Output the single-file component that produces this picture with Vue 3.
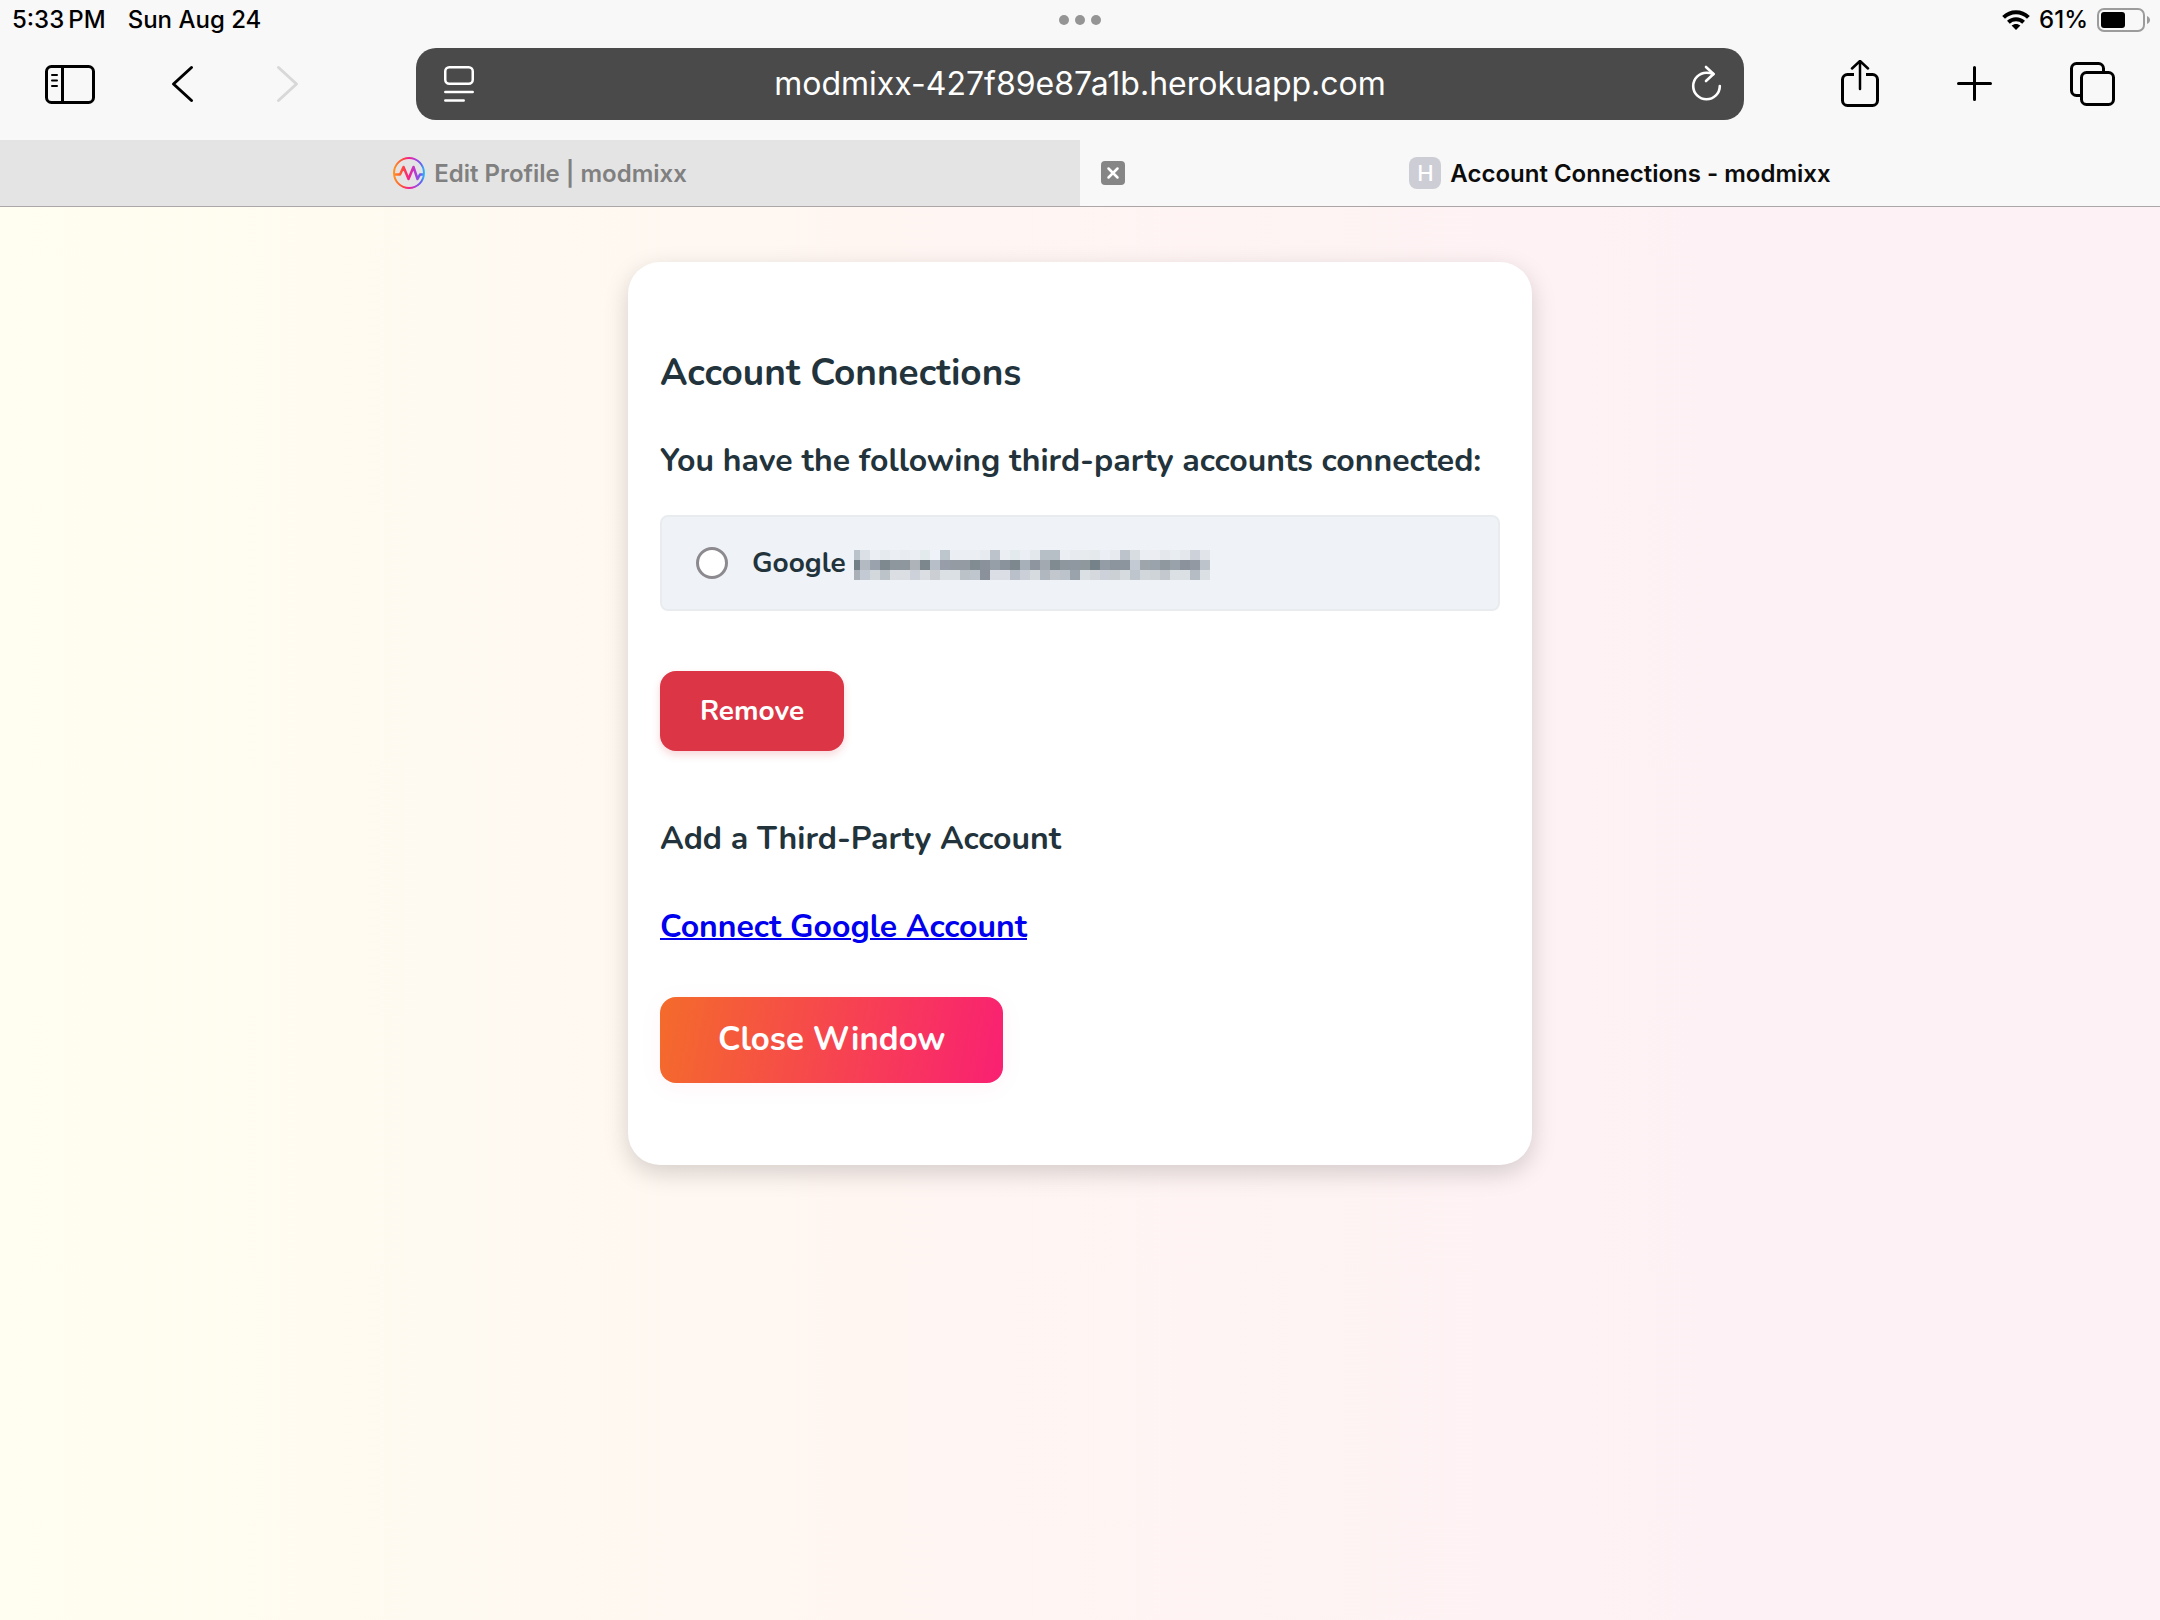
<script setup>
import { ref } from 'vue'

const selected = ref('')

// Masked account address: three rows of 10px tiles, the first column is 6px wide
const maskRows = [
  'bac3ca dbe0e6 ebeff3 e4eaee ebeef2 e8ecf0 ebeef3 e3eaec eff3f9 bdc6cc ebeff3 ebeff3 ebeff3 e7ebef bdc3cb ebeff3 e3eaee ebeff5 e3e8ec b6bfc5 b6bfc5 ebeff3 e7ebef e7ebee e4e9ec ebeff5 e7ebef bdc3cb d8dde1 ebeff3 ebedf2 e4e8ed e8edf1 e4e8ec cdd2da e1e5ea',
  '737f86 b3bac2 9aa2ad 7e888f 8f979e 8f979e adb3b9 7c878d b7bec7 979ea9 949ba3 949ba3 808b92 8a919b 969ea8 8a939c 7d888e a7afb8 8e959e a2a9b1 808b91 8f979e 8f97a0 8f989d 76828a 949ca5 8c949d 8c949d c4cad3 9ea6ac 9aa2ab 8f979f 99a1aa 8b929b 9299a3 bcc3cb',
  'a9b0b7 c4cad3 d3d8dd bcc3c9 dbdfe4 dbdfe4 cdd2da dbdfe4 cbcfd4 dbe0e4 dbe0e4 bbc2c8 c0c6cd 8a919b dbdfe5 dbdfe5 b9c0c9 cbd0d8 d6dbdf b0b7be c1c7cd bcc3cb 9aa2ab dbe0e4 d5d9de cdd2da cbd0d4 d6dbe0 bfc5cd d2d7db cfd4d8 c2c8ce dbe0e4 dbe0e4 b5bcc4 dbe0e5',
]
const tiles = maskRows.flatMap((row, y) =>
  row.split(' ').map((c, i) => ({
    x: i === 0 ? 0 : i * 10 - 4,
    y: y * 10,
    w: i === 0 ? 6 : 10,
    fill: '#' + c,
  })),
)
</script>

<template>
  <div class="screen">
    <header class="chrome">
      <div class="status">
        <div class="status-left">
          <span>5:33&#8201;PM</span>
          <span>Sun Aug 24</span>
        </div>
        <div class="dots"><i></i><i></i><i></i></div>
        <div class="status-right">
          <svg class="wifi" width="28" height="20" viewBox="0 0 28 20" fill="none" stroke="#000" stroke-width="4">
            <path d="M1.6 7.4C8.600 .6 19.400 .6 26.400 7.400" />
            <path d="M6.400 12.200C10.700 8.200 17.300 8.200 21.600 12.200" />
            <path d="M14 20l-4.400-4.400c2.500-2.200 6.300-2.200 8.800 0z" fill="#000" stroke="none" />
          </svg>
          <span>61%</span>
          <svg class="battery" width="53" height="24" viewBox="0 0 53 24">
            <rect x="1" y="1" width="46" height="22" rx="6" fill="none" stroke="#9c9c9c" stroke-width="2" />
            <rect x="4" y="4" width="24" height="16" rx="3" />
            <path d="M50 8c4 1.500 4 6.500 0 8z" fill="#9c9c9c" />
          </svg>
        </div>
      </div>

      <div class="toolbar">
        <div class="tools tools-left">
          <button type="button" class="tool" aria-label="Show sidebar">
            <svg width="60" height="48" viewBox="0 0 60 48" fill="none" stroke="#000" stroke-width="3">
              <rect x="6.500" y="6.500" width="47" height="36" rx="5" />
              <path d="M22.500 6.500v36" />
              <path d="M12 15h5M12 20.500h5M12 26h5" stroke-width="2" stroke-linecap="round" />
            </svg>
          </button>
          <button type="button" class="tool" aria-label="Back">
            <svg width="60" height="48" viewBox="0 0 60 48" fill="none" stroke="#000" stroke-width="3" stroke-linecap="round" stroke-linejoin="round">
              <path d="M42.500 7.500L24.500 24l18 16.500" />
            </svg>
          </button>
          <button type="button" class="tool" aria-label="Forward" disabled>
            <svg width="60" height="48" viewBox="0 0 60 48" fill="none" stroke="#d8d8d8" stroke-width="3" stroke-linecap="round" stroke-linejoin="round">
              <path d="M21.500 7.500L39.500 24l-18 16.500" />
            </svg>
          </button>
        </div>

        <div class="address">
          <button type="button" class="tool" aria-label="Page settings">
            <svg width="40" height="40" viewBox="0 0 40 40" fill="none" stroke="#fff" stroke-width="2.500">
              <rect x="9.250" y="3.250" width="27.500" height="16.500" rx="4" />
              <path d="M9.300 28h27.400M9.300 36.500h18.400" stroke-linecap="round" />
            </svg>
          </button>
          <input class="url" type="text" value="modmixx-427f89e87a1b.herokuapp.com" aria-label="Address" />
          <button type="button" class="tool" aria-label="Reload">
            <svg width="40" height="40" viewBox="0 0 40 40" fill="none" stroke="#fff" stroke-width="2.600" stroke-linecap="round" stroke-linejoin="round">
              <path d="M35.800 22A13.300 13.300 0 1 1 22.500 8.700Q26 8.700 29.500 10" />
              <path d="M22 3l7.500 7-7.500 7" />
            </svg>
          </button>
        </div>

        <div class="tools tools-right">
          <button type="button" class="tool" aria-label="Share">
            <svg width="60" height="48" viewBox="0 0 60 48" fill="none" stroke="#000" stroke-width="3" stroke-linecap="round" stroke-linejoin="round">
              <path d="M24 14.500h-6.500a5 5 0 0 0-5 5v21a5 5 0 0 0 5 5h25a5 5 0 0 0 5-5v-21a5 5 0 0 0-5-5H36" stroke-linecap="butt" />
              <path d="M30 29V1.500M22 8.500l8-7.500 8 7.500" stroke-width="2.500" />
            </svg>
          </button>
          <button type="button" class="tool" aria-label="New tab">
            <svg width="60" height="48" viewBox="0 0 60 48" fill="none" stroke="#000" stroke-width="3" stroke-linecap="round">
              <path d="M12.500 23.500h32M28.500 7.500v32" />
            </svg>
          </button>
          <button type="button" class="tool" aria-label="Tab overview">
            <svg width="60" height="48" viewBox="0 0 60 48" fill="none" stroke="#000" stroke-width="3">
              <path d="M18.500 35.500h-4a5 5 0 0 1-5-5v-22a5 5 0 0 1 5-5h22a5 5 0 0 1 5 5v4" />
              <rect x="19.500" y="12.500" width="32" height="32" rx="5" />
            </svg>
          </button>
        </div>
      </div>

      <nav class="tabs" aria-label="Open tabs">
        <a class="tab" href="#edit-profile">
          <span class="tab-title">
            <svg width="32" height="32" viewBox="0 0 32 32" fill="none" stroke="url(#brand)" stroke-width="2" stroke-linejoin="round">
              <defs>
                <linearGradient id="brand" x1="0" y1="0" x2="32" y2="0" gradientUnits="userSpaceOnUse">
                  <stop offset="0" stop-color="#ff9a1f" />
                  <stop offset=".3" stop-color="#ff4a3c" />
                  <stop offset=".5" stop-color="#f41f8e" />
                  <stop offset=".7" stop-color="#b23fd8" />
                  <stop offset=".88" stop-color="#5f62f2" />
                  <stop offset="1" stop-color="#1fd0f5" />
                </linearGradient>
              </defs>
              <circle cx="16" cy="16" r="15" />
              <path d="M1 17.500h6l3.500-7.500 5 12 5-12 4 12 2.500-4.500H31" stroke-width="2.500" />
            </svg>
            Edit Profile | modmixx
          </span>
        </a>
        <div class="tab tab-active">
          <button type="button" class="tab-close" aria-label="Close tab">
            <svg width="24" height="24" viewBox="0 0 24 24">
              <rect width="24" height="24" rx="4" fill="#868686" />
              <path d="M7.500 7.500l9 9M16.500 7.500l-9 9" stroke="#fff" stroke-width="2.500" stroke-linecap="round" />
            </svg>
          </button>
          <span class="tab-title"><span class="letter">H</span>Account Connections - modmixx</span>
        </div>
      </nav>
    </header>

    <main class="page">
      <section class="card">
        <h1>Account Connections</h1>
        <form @submit.prevent>
          <p class="lead">You have the following third-party accounts connected:</p>
          <label class="account">
            <input v-model="selected" type="radio" name="account" value="google" />
            <span>Google</span>
            <svg class="mask" width="356" height="34" viewBox="0 -4 356 34" shape-rendering="crispEdges" role="img" aria-label="Hidden address">
              <rect v-for="(t, i) in tiles" :key="i" :x="t.x" :y="t.y" :width="t.w" height="10" :fill="t.fill" />
            </svg>
          </label>
          <button type="submit" class="remove">Remove</button>
        </form>
        <h2>Add a Third-Party Account</h2>
        <a class="connect" href="#connect-google">Connect Google Account</a>
        <button type="button" class="close">Close Window</button>
      </section>
    </main>
  </div>
</template>

<style>
body {
  margin: 0;
}
</style>

<style scoped>
.screen {
  min-height: 100vh;
  display: flex;
  flex-direction: column;
  font-family: Nunito, Lato, sans-serif;
  color: #22333b;
}
button {
  font: inherit;
  border: 0;
  padding: 0;
  background: none;
  cursor: pointer;
}
svg {
  display: block;
  flex: none;
}

.chrome {
  background: #f8f8f8;
  border-bottom: 1px solid #aba7a8;
  font-family: Inter, sans-serif;
  color: #000;
}
.status {
  height: 40px;
  padding: 0 10px;
  display: grid;
  grid-template-columns: 1fr auto 1fr;
  align-items: center;
  font-size: 24px;
  font-weight: 500;
  line-height: 32px;
}
.status-left {
  display: flex;
  gap: 22px;
  padding-left: 2px;
}
.status-right {
  display: flex;
  justify-content: flex-end;
  align-items: center;
  gap: 9px;
}
.dots {
  display: flex;
  gap: 6px;
}
.dots i {
  width: 10px;
  height: 10px;
  border-radius: 50%;
  background: #959595;
}

.toolbar {
  display: grid;
  grid-template-columns: 416px 1fr 416px;
  align-items: center;
  padding: 8px 0 20px;
}
.tools {
  display: flex;
  justify-content: space-between;
}
.tools-left {
  padding: 0 99px 0 40px;
}
.tools-right {
  padding: 0 38px 0 86px;
}
.address {
  height: 72px;
  padding: 0 20px;
  border-radius: 20px;
  background: #4a4a4a;
  display: flex;
  align-items: center;
}
.url {
  flex: 1;
  min-width: 0;
  border: 0;
  padding: 0;
  background: none;
  color: #fff;
  font: 400 32px/48px Inter, sans-serif;
  text-align: center;
}

.tabs {
  display: grid;
  grid-template-columns: 1fr 1fr;
}
.tab {
  height: 66px;
  display: grid;
  grid-template-columns: 1fr auto 1fr;
  align-items: center;
  background: #e4e4e4;
  color: #808080;
  font-size: 24px;
  font-weight: 600;
  text-decoration: none;
}
.tab-active {
  background: #f8f8f8;
  color: #0c0c0c;
}
.tab-title {
  grid-column: 2;
  display: flex;
  align-items: center;
  gap: 9px;
}
.tab-close {
  justify-self: start;
  margin-left: 21px;
}
.letter {
  width: 32px;
  height: 32px;
  border-radius: 8px;
  background: #cdcdd6;
  color: #fff;
  font-size: 22px;
  font-weight: 500;
  line-height: 32px;
  text-align: center;
}

.page {
  flex: 1;
  padding: 55px 32px;
  background: linear-gradient(90deg, #fffef0 0%, #fff6f2 40%, #fef1f5 80%);
}
.card {
  box-sizing: border-box;
  max-width: 904px;
  margin: 0 auto;
  padding: 89px 32px 82px;
  border-radius: 32px;
  background: #fff;
  box-shadow: 0 8px 24px rgba(0, 0, 0, 0.17);
}
h1,
h2,
.lead {
  margin: 0;
  line-height: 44px;
  font-weight: 700;
}
h1 {
  font-size: 37px;
}
h2,
.lead,
.connect {
  font-size: 32px;
}
.lead {
  margin-top: 44px;
}
.account {
  height: 92px;
  margin-top: 32px;
  padding: 0 34px;
  display: flex;
  align-items: center;
  border: 2px solid #e9ecef;
  border-radius: 8px;
  background: #eff3f8;
  font-size: 28px;
  font-weight: 700;
}
.account input {
  appearance: none;
  flex: none;
  width: 32px;
  height: 32px;
  margin: 0 24px 0 0;
  border: 3px solid #8c8a8e;
  border-radius: 50%;
  background: #fff;
}
.account input:checked {
  border-width: 10px;
  border-color: #0a7aff;
}
.mask {
  margin-left: 8px;
}
.remove,
.close {
  display: block;
  border-radius: 16px;
  color: #fff;
  font-weight: 700;
}
.remove {
  margin-top: 60px;
  padding: 0 40px;
  font-size: 28px;
  line-height: 80px;
  background: #dc3545;
  box-shadow: 0 4px 8px rgba(220, 53, 69, 0.2);
}
h2 {
  margin-top: 66px;
}
.connect {
  display: inline-block;
  margin-top: 44px;
  line-height: 44px;
  font-weight: 700;
  color: #0000ee;
  text-decoration-thickness: 2px;
}
.close {
  margin-top: 48px;
  padding: 0 58px;
  font-size: 33px;
  line-height: 86px;
  background: linear-gradient(100deg, #f46b2b, #f92072);
  box-shadow: 0 4px 24px rgba(249, 32, 114, 0.05);
}
</style>
